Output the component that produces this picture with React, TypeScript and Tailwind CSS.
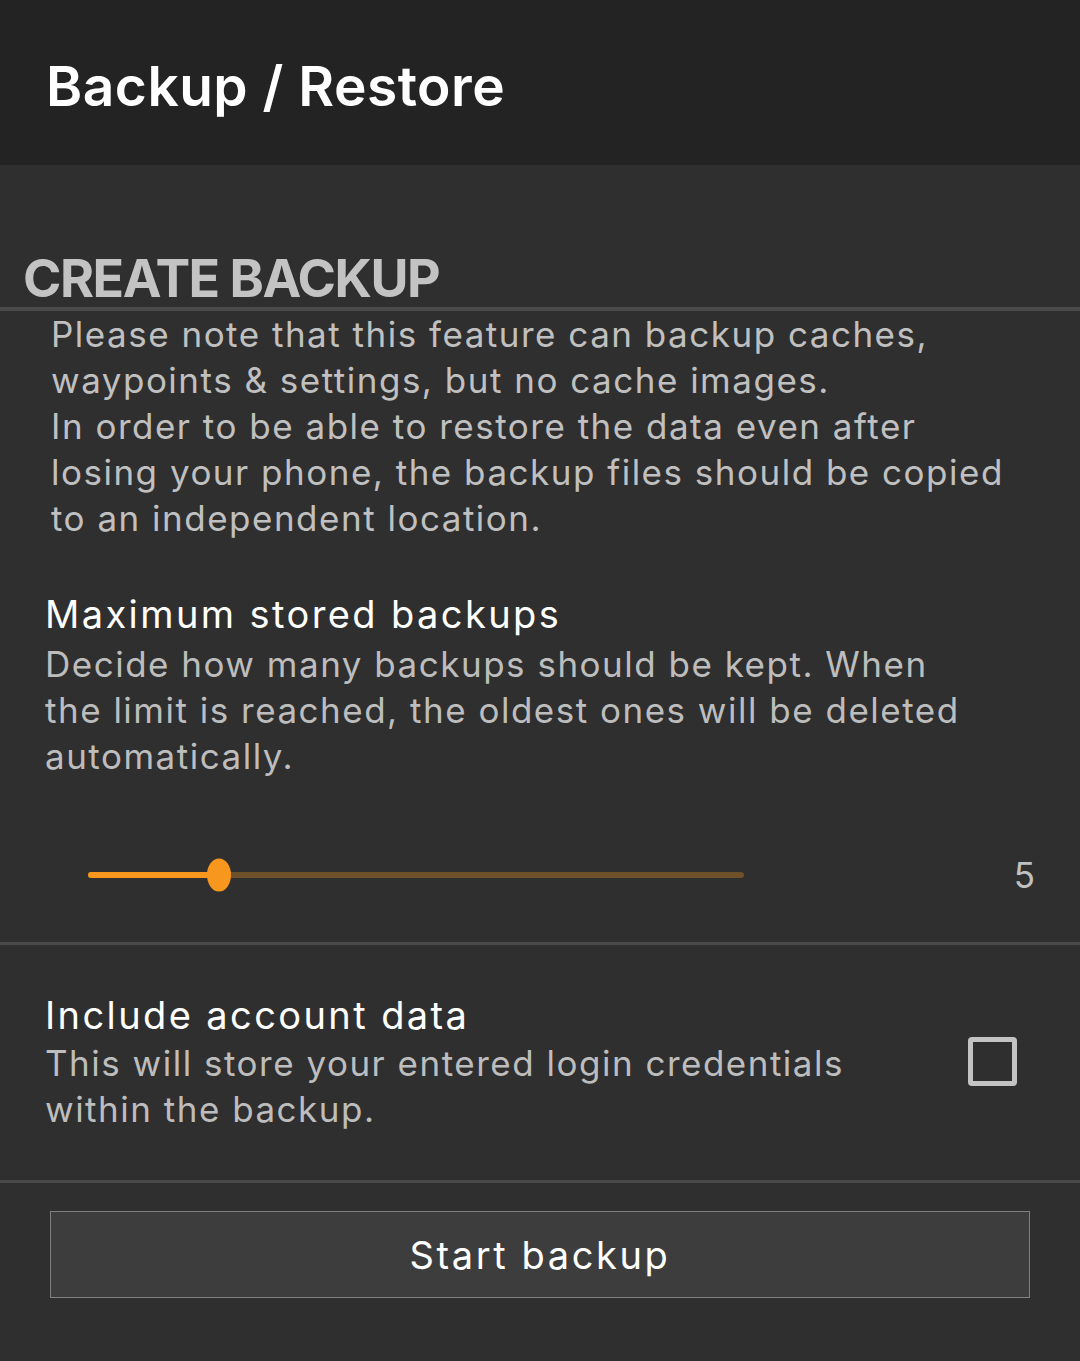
import { useState } from "react";

function Divider({ thick = false }: { thick?: boolean }) {
    return <div className={`w-full bg-[#4a4a4a] ${thick ? "h-[4px]" : "h-[3px]"}`} />;
}

function BackupSlider({ value, max }: { value: number; max: number }) {
    const pct = (value / max) * 100;
    return (
        <div className="flex items-center h-[163px] pt-[29px] pl-[88px] pr-[45px]">
            <div className="relative w-[656px] h-[6px] rounded-full bg-[#6e5128]">
                <div className="absolute left-0 top-0 h-full rounded-full bg-[#f7971e]" style={{ width: `${pct}%` }} />
                <div
                    className="absolute top-1/2 w-[24px] h-[33px] -translate-x-1/2 -translate-y-1/2 rounded-[50%] bg-[#f7971e]"
                    style={{ left: `${pct}%` }}
                />
            </div>
            <span className="ml-auto text-[35px] leading-none text-[#c0c0c0]">{value}</span>
        </div>
    );
}

export default function App() {
    const [includeAccount, setIncludeAccount] = useState(false);

    return (
        <div className="w-[1080px] min-h-[1361px] bg-[#2f2f2f] font-['Inter',sans-serif]">
            <header className="h-[165px] bg-[#232323] flex items-center px-[46px]">
                <h1 className="text-[55px] font-semibold tracking-[0.5px] text-white leading-none pt-[8px]">
                    Backup / Restore
                </h1>
            </header>

            <section className="pt-[88px]">
                <h2 className="px-[23px] text-[52px] font-bold leading-[52px] tracking-[-1.5px] text-[#c3c3c3]">
                    CREATE BACKUP
                </h2>
                <div className="mt-[2px]">
                    <Divider thick />
                </div>

                <p className="pl-[51px] pr-[20px] text-[35px] leading-[46px] tracking-[1.5px] text-[#c0c0c0]">
                    Please note that this feature can backup caches,
                    <br />
                    waypoints &amp; settings, but no cache images.
                    <br />
                    In order to be able to restore the data even after
                    <br />
                    losing your phone, the backup files should be copied
                    <br />
                    to an independent location.
                </p>

                <div className="pl-[45px] pr-[20px] mt-[48px]">
                    <div className="text-[38px] leading-[50px] pb-[2px] tracking-[2.4px] text-white">
                        Maximum stored backups
                    </div>
                    <div className="text-[35px] leading-[46px] tracking-[1.5px] text-[#bdbdbd]">
                        Decide how many backups should be kept. When
                        <br />
                        the limit is reached, the oldest ones will be deleted
                        <br />
                        automatically.
                    </div>
                </div>

                <BackupSlider value={5} max={25} />
                <Divider />

                <div className="flex items-center pl-[45px] pr-[63px] pt-[45px] pb-[48px]">
                    <div className="flex-1">
                        <div className="text-[38px] leading-[50px] tracking-[2.4px] text-white">Include account data</div>
                        <div className="text-[35px] leading-[46px] tracking-[1.5px] text-[#bdbdbd]">
                            This will store your entered login credentials
                            <br />
                            within the backup.
                        </div>
                    </div>
                    <button
                        type="button"
                        onClick={() => setIncludeAccount(!includeAccount)}
                        className={`w-[49px] h-[49px] rounded-[4px] border-[5px] border-[#c3c3c3] ${includeAccount ? "bg-[#c3c3c3]" : ""}`}
                    />
                </div>
                <Divider />

                <div className="px-[50px] pt-[28px]">
                    <button
                        type="button"
                        className="w-full h-[87px] bg-[#3d3d3d] border border-[#808080] text-[38px] tracking-[2.6px] text-white leading-none"
                    >
                        Start backup
                    </button>
                </div>
            </section>
        </div>
    );
}
